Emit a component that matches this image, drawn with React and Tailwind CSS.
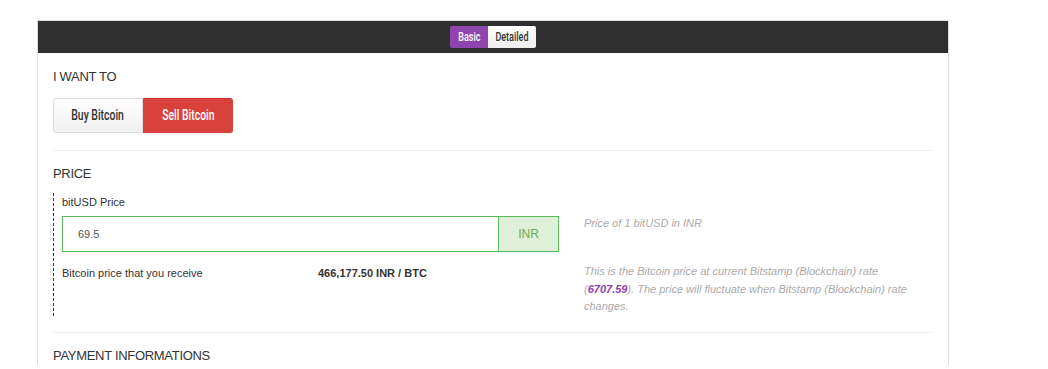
import { useState } from "react";

function App() {
  const [mode, setMode] = useState("basic");
  const [side, setSide] = useState("sell");

  // no condensed font offline, so squeeze Roboto instead
  const narrow = "inline-block font-['Roboto',sans-serif] font-medium scale-x-[0.72]";

  return (
    <div className="min-h-screen bg-white pt-[20px] pl-[37px] font-['Liberation_Sans',Arial,sans-serif] text-[#333]">
      <div className="w-[912px] border-x border-t border-[#ddd] bg-white">
        {/* top bar */}
        <div className="h-[32px] bg-[#2f2f2f] flex items-center justify-center">
          <div className="flex h-[22px] rounded-[2px] overflow-hidden text-[12.5px]">
            <button
              onClick={() => setMode("basic")}
              className={`w-[38px] ${mode === "basic" ? "bg-[#8e44ad] text-white" : "bg-gradient-to-b from-white to-[#eee] text-[#333]"}`}
            >
              <span className={narrow}>Basic</span>
            </button>
            <button
              onClick={() => setMode("detailed")}
              className={`w-[48px] ${mode === "detailed" ? "bg-[#8e44ad] text-white" : "bg-gradient-to-b from-white to-[#eee] text-[#333]"}`}
            >
              <span className={narrow}>Detailed</span>
            </button>
          </div>
        </div>

        <div className="px-[15px]">
          {/* I want to */}
          <h3 className="mt-[15px] text-[13px] leading-[18px] tracking-[-0.3px] uppercase">I want to</h3>
          <div className="mt-[12px] flex h-[35px] text-[14.5px]">
            <button
              onClick={() => setSide("buy")}
              className={`w-[90px] rounded-l-[3px] border ${side === "buy" ? "bg-[#d9413b] border-[#c9302c] text-white" : "bg-gradient-to-b from-white to-[#f0f0f0] border-[#ddd] text-[#333]"}`}
            >
              <span className={narrow}>Buy Bitcoin</span>
            </button>
            <button
              onClick={() => setSide("sell")}
              className={`w-[90px] rounded-r-[3px] border ${side === "sell" ? "bg-[#d9413b] border-[#d9413b] border-t-[#c9302c] text-white" : "bg-gradient-to-b from-white to-[#f0f0f0] border-[#ddd] text-[#333]"}`}
            >
              <span className={narrow}>Sell Bitcoin</span>
            </button>
          </div>

          <div className="mt-[17px] border-t border-[#eee]" />

          {/* price */}
          <h3 className="mt-[14px] text-[13px] leading-[18px] tracking-[-0.3px] uppercase">Price</h3>
          <div className="mt-[10px] flex text-[11px]">
            <div className="w-[506px] border-l border-dashed border-[#333] pl-[8px] pt-[1px] pb-[35px]">
              <div className="leading-[16px]">bitUSD Price</div>
              <div className="mt-[6px] flex h-[36px] w-[497px]">
                <div className="flex-1 border border-[#5cb85c] flex items-center pl-[15px] text-[#555]">69.5</div>
                <div className="w-[60px] border border-l-0 border-[#5cb85c] bg-[#dff0d8] flex items-center justify-center text-[#6fa85a] text-[12px]">
                  INR
                </div>
              </div>
              <div className="mt-[13px] flex leading-[16px]">
                <div className="w-[256px]">Bitcoin price that you receive</div>
                <div className="font-bold">466,177.50 INR / BTC</div>
              </div>
            </div>
            <div className="ml-[25px] w-[347px] italic text-[#aaa] leading-[17.3px]">
              <p className="mt-[22px]">Price of 1 bitUSD in INR</p>
              <div className="mt-[31px]">
                <div>This is the Bitcoin price at current Bitstamp (Blockchain) rate</div>
                <div>
                  (<span className="font-bold text-[#8e44ad]">6707.59</span>). The price will fluctuate when Bitstamp (Blockchain) rate
                </div>
                <div>changes.</div>
              </div>
            </div>
          </div>

          <div className="mt-[16px] border-t border-[#eee]" />

          <h3 className="mt-[14px] text-[13px] leading-[18px] tracking-[-0.3px] uppercase">Payment informations</h3>
        </div>
      </div>
    </div>
  );
}

export default App;
